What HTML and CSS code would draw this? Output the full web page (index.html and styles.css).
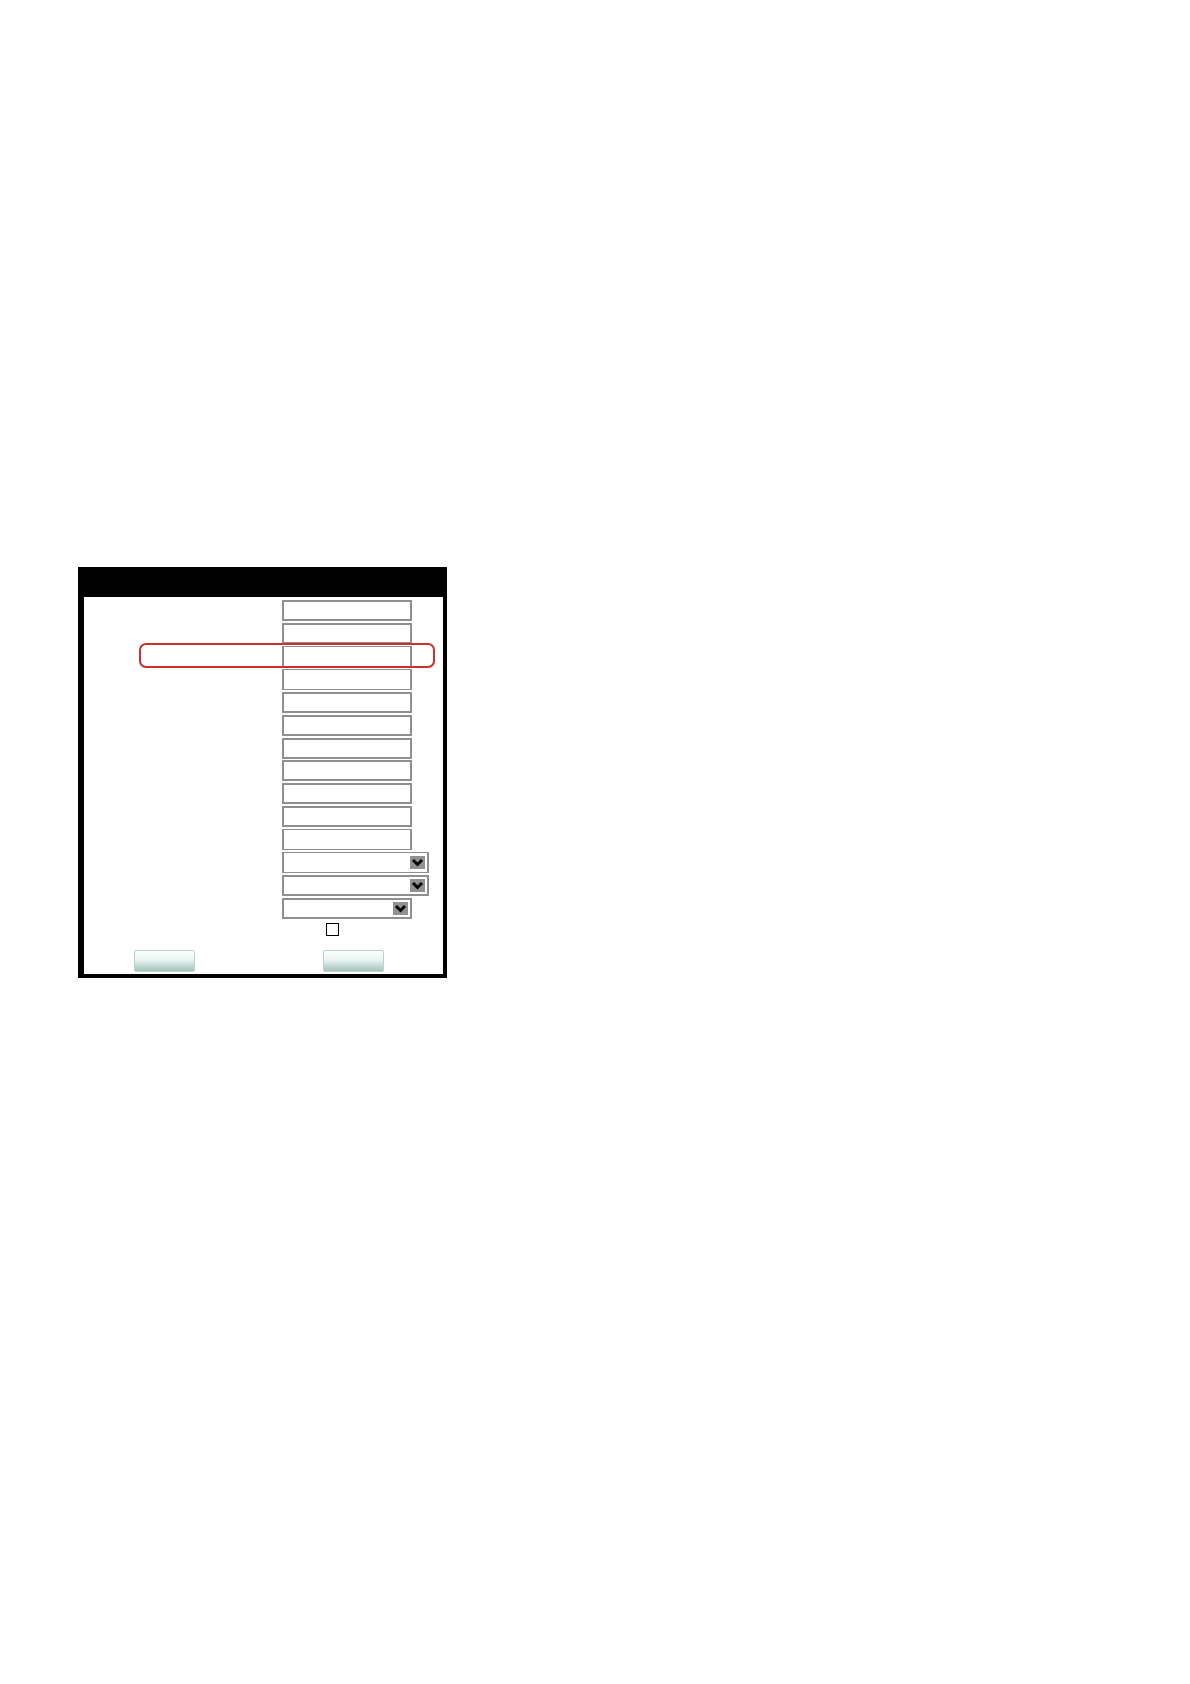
FILE: index.html
```html
<!DOCTYPE html>
<html lang="en">
<head>
<meta charset="utf-8">
<meta name="viewport" content="width=device-width, initial-scale=1">
<title>Settings</title>
<link rel="stylesheet" href="styles.css">
</head>
<body>
<main class="page">
  <form class="panel">
    <header class="panel-header"></header>
    <div class="panel-body">
      <div class="fields">
        <div class="row"><input class="field" type="text" aria-label="Field 1"></div>
        <div class="row"><input class="field" type="text" aria-label="Field 2"></div>
        <div class="row row-highlight"><input class="field field-thin" type="text" aria-label="Field 3"></div>
        <div class="row"><input class="field field-thin" type="text" aria-label="Field 4"></div>
        <div class="row"><input class="field" type="text" aria-label="Field 5"></div>
        <div class="row"><input class="field" type="text" aria-label="Field 6"></div>
        <div class="row"><input class="field" type="text" aria-label="Field 7"></div>
        <div class="row"><input class="field" type="text" aria-label="Field 8"></div>
        <div class="row"><input class="field" type="text" aria-label="Field 9"></div>
        <div class="row"><input class="field" type="text" aria-label="Field 10"></div>
        <div class="row"><input class="field field-thin" type="text" aria-label="Field 11"></div>
        <div class="row">
          <div class="picker picker-wide">
            <select class="field field-thin" aria-label="Option 1"><option></option></select>
            <svg class="arrow" viewBox="0 0 15 13" aria-hidden="true"><path class="arrow-box" d="M0 0h15v13H0z"/><path class="arrow-mark" d="M3 4l4.500 4.500L12 4"/></svg>
          </div>
        </div>
        <div class="row">
          <div class="picker picker-wide">
            <select class="field" aria-label="Option 2"><option></option></select>
            <svg class="arrow" viewBox="0 0 15 13" aria-hidden="true"><path class="arrow-box" d="M0 0h15v13H0z"/><path class="arrow-mark" d="M3 4l4.500 4.500L12 4"/></svg>
          </div>
        </div>
        <div class="row">
          <div class="picker">
            <select class="field" aria-label="Option 3"><option></option></select>
            <svg class="arrow" viewBox="0 0 15 13" aria-hidden="true"><path class="arrow-box" d="M0 0h15v13H0z"/><path class="arrow-mark" d="M3 4l4.500 4.500L12 4"/></svg>
          </div>
        </div>
      </div>
      <div class="check-row"><input class="check" type="checkbox" aria-label="Enable"></div>
      <div class="actions">
        <button class="button" type="button" aria-label="Confirm"></button>
        <button class="button" type="button" aria-label="Cancel"></button>
      </div>
    </div>
  </form>
</main>
</body>
</html>
```
FILE: styles.css
```css
* {
  box-sizing: border-box;
}

body {
  margin: 0;
  min-height: 100vh;
  background: #fff;
  font: 12px/16px "Liberation Sans", Arial, sans-serif;
}

.page {
  padding: 567px 78px 0;
}

.panel {
  max-width: 369px;
  border: solid #000;
  border-width: 0 4px 4px 6px;
}

.panel-header {
  height: 30px;
  background: #000;
}

.panel-body {
  padding: 3px 0 2px;
}

.fields {
  display: flex;
  flex-direction: column;
  justify-content: space-between;
  min-height: 319px;
}

.row {
  position: relative;
  display: flex;
  padding-left: 198px;
}

.row-highlight::after {
  content: "";
  position: absolute;
  z-index: 1;
  inset: -3px 8px -1px 55px;
  border: 2px solid #c9302f;
  border-radius: 7px;
  pointer-events: none;
}

.field {
  appearance: none;
  display: block;
  width: 130px;
  height: 21px;
  margin: 0;
  padding: 0 4px;
  border: 2px solid #8f8f8f;
  border-radius: 0;
  background: #fff;
  font: inherit;
}

.field-thin {
  border-width: 1px 2px;
}

.picker {
  position: relative;
  width: 130px;
}

.picker-wide {
  width: 147px;
}

.picker .field {
  width: 100%;
}

.arrow {
  position: absolute;
  top: 4px;
  right: 4px;
  width: 15px;
  height: 13px;
  pointer-events: none;
}

.arrow-box {
  fill: #919191;
}

.arrow-mark {
  fill: none;
  stroke: #000;
  stroke-width: 3;
}

.check-row {
  display: flex;
  padding: 4px 0 0 242px;
}

.check {
  appearance: none;
  width: 13px;
  height: 13px;
  margin: 0;
  border: 1px solid #000;
  background: #fff;
}

.actions {
  display: flex;
  gap: 128px;
  padding: 14px 0 0 50px;
}

.button {
  width: 61px;
  height: 22px;
  padding: 0;
  border: 1px solid #b9d2cc;
  border-radius: 2px;
  background: linear-gradient(#fcfefd, #e9f4f1 45%, #c5dcd7 72%, #bcd5cf 80%, #a5c2bb);
}
```
